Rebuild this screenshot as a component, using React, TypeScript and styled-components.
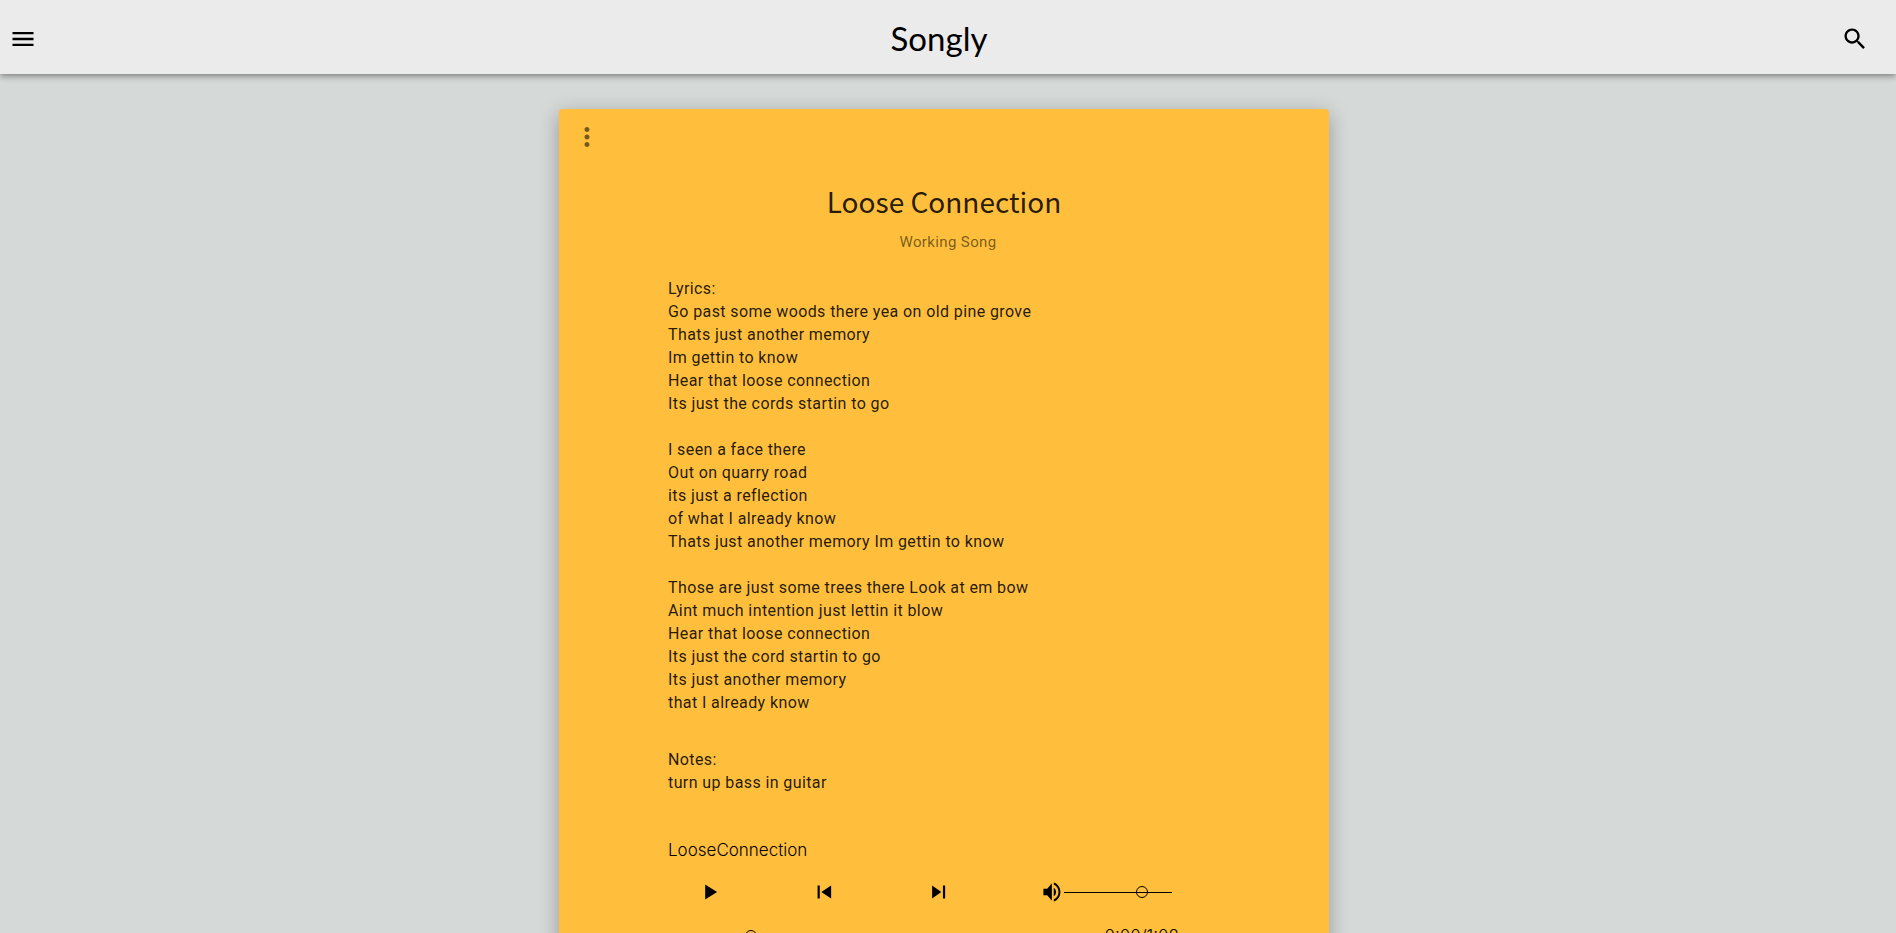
import React from "react";
import styled, { createGlobalStyle } from "styled-components";

const GlobalStyle = createGlobalStyle`
  * { box-sizing: border-box; }
  body {
    margin: 0;
    background: #d5d9d7;
    color: #000;
    font-family: Roboto, "Liberation Sans", sans-serif;
  }
`;

const Page = styled.div`
  display: flex;
  flex-direction: column;
  height: 100vh;
`;

const Header = styled.header`
  position: relative;
  z-index: 1;
  display: flex;
  flex: none;
  align-items: center;
  justify-content: space-between;
  padding: 19px 27px 15px 9px;
  background: #ebebeb;
  box-shadow:
    0 2px 4px -1px rgba(0, 0, 0, 0.2),
    0 4px 5px 0 rgba(0, 0, 0, 0.14),
    0 1px 10px 0 rgba(0, 0, 0, 0.12);
`;

const Brand = styled.h1`
  margin: 0;
  padding-bottom: 2px;
  font: 400 33px/38px Lato, sans-serif;
`;

const IconButton = styled.button<{ $muted?: boolean }>`
  display: flex;
  padding: 0;
  border: 0;
  background: none;
  color: ${(p) => (p.$muted ? "rgba(0, 0, 0, 0.54)" : "#000")};
  cursor: pointer;
`;

const Icon = styled.svg<{ $size: number }>`
  display: block;
  flex: none;
  width: ${(p) => p.$size}px;
  height: ${(p) => p.$size}px;
  fill: currentColor;
`;

const Main = styled.main`
  display: flex;
  flex: 1;
  align-items: flex-start;
  justify-content: center;
  min-height: 0;
  padding: 35px 8px 0 0;
  overflow-y: auto;
  scrollbar-width: none;
`;

const Card = styled.article`
  width: 770px;
  max-width: 100%;
  padding: 13px 13px 80px;
  border-radius: 4px;
  background: #ffbf3c;
  box-shadow: 0 5px 20px rgba(0, 0, 0, 0.3);
`;

const CardHeading = styled.header`
  padding-top: 29px;
  text-align: center;
`;

const Title = styled.h2`
  margin: 0;
  color: rgba(0, 0, 0, 0.87);
  font: 400 28px/40px "Noto Sans CJK JP", sans-serif;
`;

const Subtitle = styled.p`
  margin: 10px 0 0;
  padding-left: 8px;
  color: rgba(0, 0, 0, 0.54);
  font-size: 15px;
  line-height: 22px;
  letter-spacing: 0.025em;
`;

const Body = styled.div`
  padding: 24px 96px 0;
`;

const Text = styled.p`
  margin: 0 0 34px;
  color: rgba(0, 0, 0, 0.87);
  font-size: 16px;
  line-height: 23px;
  letter-spacing: 0.025em;
  white-space: pre-line;
`;

const TrackName = styled.h3`
  margin: 0;
  padding-top: 10px;
  font: 300 17px/24px Inter, sans-serif;
`;

const Controls = styled.div`
  display: grid;
  grid-template-columns: repeat(3, 114px) auto;
  align-items: center;
  margin-top: 17px;
  padding-left: 28px;
`;

const Volume = styled.label`
  display: flex;
  align-items: center;
`;

const Range = styled.input<{ $width: number }>`
  appearance: none;
  flex: none;
  width: ${(p) => p.$width}px;
  height: 12px;
  margin: 0;
  background: linear-gradient(#000, #000) center / 100% 1px no-repeat;

  &::-webkit-slider-thumb {
    appearance: none;
    width: 12px;
    height: 12px;
    border: 1px solid #000;
    border-radius: 50%;
    background: transparent;
  }
`;

const Progress = styled.div`
  display: flex;
  align-items: center;
  justify-content: space-between;
  width: 511px;
  margin-top: 19px;
  padding-left: 77px;
`;

const Time = styled.span`
  font: 300 17px/24px Inter, sans-serif;
`;

const PATHS = {
  menu: "M3 18h18v-2H3v2zm0-5h18v-2H3v2zm0-7v2h18V6H3z",
  search:
    "M15.5 14h-.79l-.28-.27C15.41 12.59 16 11.11 16 9.5 16 5.91 13.09 3 9.5 3S3 5.91 3 9.5 5.91 16 9.5 16c1.61 0 3.09-.59 4.23-1.57l.27.28v.79l5 4.99L20.49 19l-4.99-5zm-6 0C7.01 14 5 11.99 5 9.5S7.01 5 9.5 5 14 7.01 14 9.5 11.99 14 9.5 14z",
  more: "M12 8c1.1 0 2-.9 2-2s-.9-2-2-2-2 .9-2 2 .9 2 2 2zm0 2c-1.1 0-2 .9-2 2s.9 2 2 2 2-.9 2-2-.9-2-2-2zm0 6c-1.1 0-2 .9-2 2s.9 2 2 2 2-.9 2-2-.9-2-2-2z",
  play: "M8.500 5v14l11-7z",
  previous: "M7 6h2v12H7zm3.500 6l9 6V6z",
  next: "M7.500 18l8.500-6-8.500-6v12zM17.500 6v12h2V6h-2z",
  volume:
    "M5 9v6h3.5l4.3 5V4L8.5 9H5zm11.7 3c0-1.77-.89-3.29-2.17-4.03v8.05c1.29-.73 2.17-2.25 2.17-4.02zM14.6 3.23v2.06c2.51.86 4.35 3.54 4.35 6.71s-1.84 5.85-4.35 6.71v2.06c3.49-.91 6.09-4.49 6.09-8.77s-2.6-7.86-6.09-8.77z",
};

function Glyph({ name, size }: { name: keyof typeof PATHS; size: number }) {
  return (
    <Icon $size={size} viewBox="0 0 24 24" aria-hidden="true">
      <path d={PATHS[name]} />
    </Icon>
  );
}

const lyrics = `Lyrics:
Go past some woods there yea on old pine grove
Thats just another memory
Im gettin to know
Hear that loose connection
Its just the cords startin to go

I seen a face there
Out on quarry road
its just a reflection
of what I already know
Thats just another memory Im gettin to know

Those are just some trees there Look at em bow
Aint much intention just lettin it blow
Hear that loose connection
Its just the cord startin to go
Its just another memory
that I already know`;

const notes = `Notes:
turn up bass in guitar`;

export default function App() {
  return (
    <Page>
      <GlobalStyle />
      <Header>
        <IconButton aria-label="Open menu"><Glyph name="menu" size={28} /></IconButton>
        <Brand>Songly</Brand>
        <IconButton aria-label="Search"><Glyph name="search" size={28} /></IconButton>
      </Header>
      <Main>
        <Card>
          <IconButton $muted aria-label="Song options"><Glyph name="more" size={30} /></IconButton>
          <CardHeading>
            <Title>Loose Connection</Title>
            <Subtitle>Working Song</Subtitle>
          </CardHeading>
          <Body>
            <Text>{lyrics}</Text>
            <Text>{notes}</Text>
            <TrackName>LooseConnection</TrackName>
            <Controls>
              <IconButton aria-label="Play"><Glyph name="play" size={26} /></IconButton>
              <IconButton aria-label="Previous track"><Glyph name="previous" size={26} /></IconButton>
              <IconButton aria-label="Next track"><Glyph name="next" size={26} /></IconButton>
              <Volume>
                <Glyph name="volume" size={26} />
                <Range $width={108} type="range" aria-label="Volume" defaultValue={75} />
              </Volume>
            </Controls>
            <Progress>
              <Range $width={240} type="range" aria-label="Position" defaultValue={0} />
              <Time>0:00/1:08</Time>
            </Progress>
          </Body>
        </Card>
      </Main>
    </Page>
  );
}
